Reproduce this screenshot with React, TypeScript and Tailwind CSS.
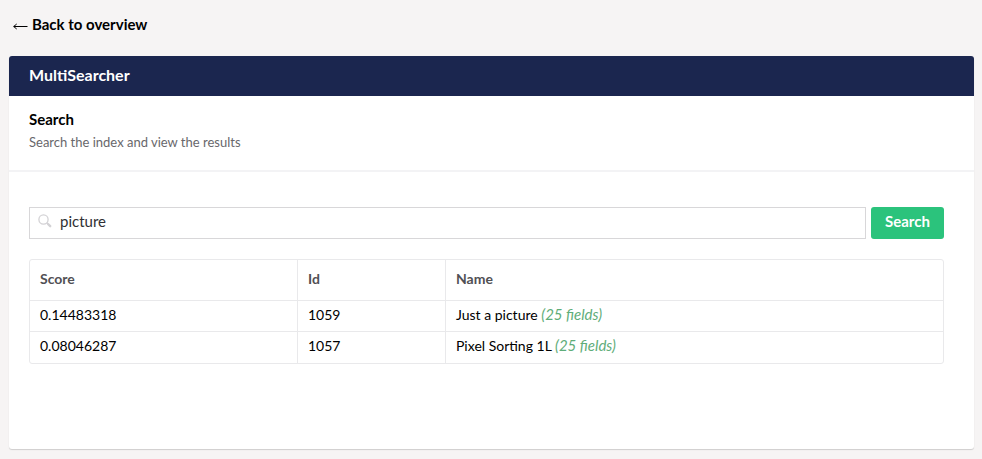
const rows = [
  { score: "0.14483318", id: "1059", name: "Just a picture", link: "(25 fields)", height: "h-[31px]" },
  { score: "0.08046287", id: "1057", name: "Pixel Sorting 1L", link: "(25 fields)", height: "h-8" },
];

export default function App() {
  return (
    <div className="h-[459px] w-[982px] overflow-hidden bg-[#f6f4f4] pl-[9px] pr-2 font-[Lato,sans-serif] text-black">
      <div className="flex h-14 items-start pl-1 pt-[13px] text-[15px] font-bold leading-[22px]">
        <svg className="mr-1 mt-[9px] h-[9px] w-[15px]" viewBox="0 0 15 9" fill="none" stroke="#000" strokeWidth="1">
          <path d="M14.5 4.5H0.7M3.7 2L0.7 4.5L3.7 7" />
        </svg>
        Back to overview
      </div>
      <div className="flex h-[393px] flex-col rounded-[3px] bg-white shadow-[0_1px_1px_0_rgba(0,0,0,0.16)]">
        <div className="flex h-10 shrink-0 items-center rounded-t-[3px] bg-[#1b264f] px-5 pb-[3px] text-base font-bold text-white">MultiSearcher</div>
        <div className="h-[76px] shrink-0 border-b-2 border-[#f3f3f5] px-5 pt-3">
          <div className="text-[15px] font-bold leading-[22px]">Search</div>
          <div className="mt-[2px] text-[13px] leading-5 text-[#68676b]">Search the index and view the results</div>
        </div>
        <div className="pl-5 pr-[30px] pt-[35px]">
          <div className="flex gap-[5px]">
            <div className="flex h-8 flex-1 items-center border border-[#d8d7d9] pb-1 pl-2 text-[15px] text-[#303033]">
              <svg className="mr-2 h-[14px] w-[14px]" viewBox="0 0 14 14" fill="none" stroke="#d3d2d5">
                <circle cx="5.5" cy="5.5" r="4.6" strokeWidth="1.3" />
                <path d="M8.8 8.8L10 10" strokeWidth="1.3" />
                <path d="M10 10L12.2 12.2" strokeWidth="2.4" strokeLinecap="round" />
              </svg>
              picture
            </div>
            <div className="flex h-8 w-[73px] items-center justify-center rounded-[3px] bg-[#2bc37c] pb-1 text-[15px] font-bold text-white">Search</div>
          </div>
          <div className="mt-5 rounded-[3px] border border-[#e9e9eb] text-[14px]">
            <div className="grid h-10 grid-cols-[267px_148px_1fr] font-bold leading-[38px] text-[#515054]">
              <div className="pl-[10px]">Score</div>
              <div className="border-l border-[#e9e9eb] pl-[10px]">Id</div>
              <div className="border-l border-[#e9e9eb] pl-[10px]">Name</div>
            </div>
            {rows.map((r) => (
              <div key={r.id} className={`grid grid-cols-[267px_148px_1fr] border-t border-[#e9e9eb] leading-7 ${r.height}`}>
                <div className="pl-[10px]">{r.score}</div>
                <div className="border-l border-[#e9e9eb] pl-[10px]">{r.id}</div>
                <div className="border-l border-[#e9e9eb] pl-[10px] leading-[26px]">{r.name} <span className="text-[15px] italic text-[#5fad79]">{r.link}</span></div>
              </div>
            ))}
          </div>
        </div>
      </div>
    </div>
  );
}
